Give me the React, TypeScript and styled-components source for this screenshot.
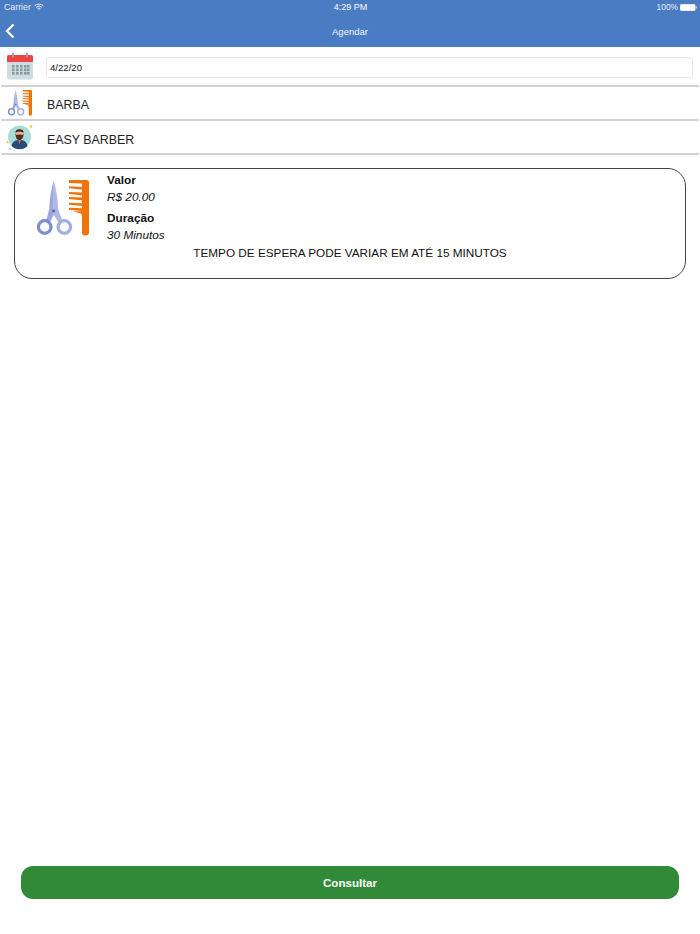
import React from 'react';
import styled, { createGlobalStyle } from 'styled-components';

const Global = createGlobalStyle`
  html, body { margin: 0; padding: 0; background: #fff; }
  body { font-family: "Liberation Sans", Arial, sans-serif; }
`;
const Page = styled.div`
  width: 700px; height: 934px; display: flex; flex-direction: column; background: #fff; overflow: hidden;
`;
const Header = styled.header`
  height: 47px; flex: none; background: #4a7cc4; color: #fff; display: flex; flex-direction: column;
`;
const StatusBar = styled.div`
  height: 14px; padding: 0 3px 0 4px; display: grid; grid-template-columns: 1fr auto 1fr; align-items: center;
  font-size: 8.8px; color: #e6edf8;
`;
const StatusLeft = styled.div`display: flex; align-items: center; gap: 3px;`;
const StatusRight = styled.div`display: flex; align-items: center; justify-content: flex-end; gap: 2px; font-size: 8.4px;`;
const Clock = styled.div`color: #fff; font-size: 9px;`;
const NavBar = styled.div`
  flex: 1; display: grid; grid-template-columns: 1fr auto 1fr; align-items: center; font-size: 9.5px; color: #eef3fb; margin-top: 1px;
`;
const BackSlot = styled.div`display: flex; align-items: center; padding-left: 4px;`;
const Row = styled.div<{ $h: number }>`
  box-sizing: border-box; height: ${p => p.$h}px; flex: none; margin: 0 1px; border-bottom: 2px solid #d2d2d2;
  display: flex; align-items: center; padding: 0 6px 0 5px; gap: 12px;
`;
const IconSlot = styled.div`width: 28px; height: 28px; flex: none; display: flex; align-items: center; justify-content: center;`;
const DateInput = styled.div`
  flex: 1; box-sizing: border-box; height: 21px; margin-top: 3px; border: 1px solid #e8e8e8; border-radius: 3px;
  font-size: 9.6px; color: #111; display: flex; align-items: center; padding-left: 3px;
`;
const RowLabel = styled.div<{ $dy: number }>`font-size: 12.4px; color: #222; margin: ${p => p.$dy}px 0 0 1px;`;
const Card = styled.section`
  margin: 13px 14px 0; height: 111px; box-sizing: border-box; border: 1px solid #444; border-radius: 18px; padding-top: 3px; flex: none;
`;
const CardTop = styled.div`display: flex; gap: 18px; padding-left: 22px;`;
const CardIcon = styled.div`margin-top: 8px; line-height: 0;`;
const Info = styled.div`display: flex; flex-direction: column; color: #111; font-size: 11.8px;`;
const Label = styled.div<{ $mt: number }>`font-weight: 700; line-height: 15px; margin-top: ${p => p.$mt}px;`;
const Value = styled.div`font-style: italic; line-height: 19px;`;
const Notice = styled.div`text-align: center; font-size: 11.75px; color: #111; line-height: 16px;`;
const Spacer = styled.div`flex: 1;`;
const Button = styled.button`
  flex: none; margin: 0 21px 35px; height: 33px; border: 0; border-radius: 12px; background: #318a38; color: #fff;
  font: 700 11.6px "Liberation Sans", Arial, sans-serif;
`;

const Wifi = () => (
  <svg width="10" height="8" viewBox="0 0 11 8" fill="none" stroke="#e6edf8" strokeWidth="1.1">
    <path d="M.7 2.7a7 7 0 0 1 9.6 0M2.3 4.3a4.7 4.7 0 0 1 6.4 0M3.9 5.9a2.3 2.3 0 0 1 3.2 0" />
    <circle cx="5.5" cy="7" r=".6" fill="#e6edf8" stroke="none" />
  </svg>
);
const Battery = () => (
  <svg width="17" height="7" viewBox="0 0 17 7">
    <rect x="0.3" y="0.3" width="14.8" height="6.4" rx="1.2" fill="#fff" stroke="#fff" strokeWidth=".5" />
    <rect x="15.6" y="2.3" width="1.2" height="2.4" rx=".5" fill="#dfe8f5" />
  </svg>
);
const Back = () => (
  <svg width="12" height="16" viewBox="0 0 12 16" fill="none" stroke="#fff" strokeWidth="2.3">
    <path d="M9.5 1.5 3 8l6.5 6.5" />
  </svg>
);
const Calendar = () => (
  <svg width="28" height="28" viewBox="0 0 28 28">
    <rect x="1" y="3" width="26" height="24.5" rx="2" fill="#cfdce2" />
    <path d="M1 10V5a2 2 0 0 1 2-2h22a2 2 0 0 1 2 2v5z" fill="#ee4343" />
    <rect x="6" y="0.5" width="2" height="5" rx="1" fill="#9aa6ad" />
    <rect x="20" y="0.5" width="2" height="5" rx="1" fill="#9aa6ad" />
    {[13, 16.5, 20].map(y => [6, 10, 14, 18, 21].map(x => (
      <rect key={`${x}-${y}`} x={x} y={y} width="2.6" height="2.6" fill="#8b9aa2" />
    )))}
  </svg>
);
const toothCentres = [7.3, 13, 18, 23.7, 28.7];
const ScissorsComb = ({ w, h }: { w: number; h: number }) => (
  <svg width={w} height={h} viewBox="0 0 52 56">
    <path d="M16.7 0C14.5 9 12.3 19 12.3 29L9 41L12.5 43L16.7 35z" fill="#9ca7de" />
    <path d="M16.7 0C19 9 21.1 19 21.1 29L25.5 41L22 43L16.7 35z" fill="#b0b9e6" />
    <circle cx="7.7" cy="47" r="6.3" fill="none" stroke="#7f8dd3" strokeWidth="3.2" />
    <circle cx="27.3" cy="47" r="6.3" fill="none" stroke="#a3aee0" strokeWidth="3.2" />
    <circle cx="16.7" cy="31" r="1.4" fill="#4f5fb5" />
    <path d="M32 0H49.5a2.5 2.500 0 0 1 2.500 2.500V52.500a3 3 0 0 1-3 3H48a3 3 0 0 1-3-3V36.500a3 3 0 0 0-3-3.500L36 31.500L45 31V3.500L32 3z" fill="#f0730a" />
    {toothCentres.map(y => (
      <polygon key={y} points={`32,${y - 1} 46,${y - 0.4} 46,${y + 2.4} 32,${y + 1}`} fill="#f0730a" />
    ))}
  </svg>
);
const Barber = () => (
  <svg width="28" height="28" viewBox="0 0 28 28">
    <circle cx="13.5" cy="14" r="11.5" fill="#a9dcd9" />
    <path d="M5.5 23c1-5 4-6 8-6s7 1 8 6a11.5 11.5 0 0 1-16 0z" fill="#274c77" />
    <path d="M12 17l1.5 4 1.5-4z" fill="#e8604c" />
    <circle cx="13.5" cy="10.5" r="4.2" fill="#e3b48e" />
    <path d="M9.3 9.5c0-4.5 8.4-4.5 8.4 0l-.6 0c-2-1.5-5.2-1.5-7.2 0z" fill="#33231c" />
    <path d="M9.4 10.5c.3 5 1.8 6.5 4.1 6.5s3.8-1.5 4.1-6.5l-1 1.5c-2-.8-4.2-.8-6.2 0z" fill="#4a2f22" />
    <circle cx="25" cy="3.5" r="1.3" fill="#f2c230" />
    <circle cx="1.5" cy="19" r="1.1" fill="#f2c230" />
    <circle cx="25" cy="22" r=".8" fill="#efe08a" />
    <circle cx="4" cy="26" r=".7" fill="#5b7fc0" />
  </svg>
);

export default function App() {
  return (
    <Page>
      <Global />
      <Header>
        <StatusBar>
          <StatusLeft>Carrier <Wifi /></StatusLeft>
          <Clock>4:29 PM</Clock>
          <StatusRight>100% <Battery /></StatusRight>
        </StatusBar>
        <NavBar>
          <BackSlot><Back /></BackSlot>
          <div>Agendar</div>
          <div />
        </NavBar>
      </Header>
      <Row $h={40}>
        <IconSlot><Calendar /></IconSlot>
        <DateInput>4/22/20</DateInput>
      </Row>
      <Row $h={34}>
        <IconSlot><ScissorsComb w={24} h={26} /></IconSlot>
        <RowLabel $dy={3}>BARBA</RowLabel>
      </Row>
      <Row $h={34}>
        <IconSlot><Barber /></IconSlot>
        <RowLabel $dy={5}>EASY BARBER</RowLabel>
      </Row>
      <Card>
        <CardTop>
          <CardIcon><ScissorsComb w={52} h={56} /></CardIcon>
          <Info>
            <Label $mt={1}>Valor</Label>
            <Value>R$ 20.00</Value>
            <Label $mt={4}>Duração</Label>
            <Value>30 Minutos</Value>
          </Info>
        </CardTop>
        <Notice>TEMPO DE ESPERA PODE VARIAR EM ATÉ 15 MINUTOS</Notice>
      </Card>
      <Spacer />
      <Button>Consultar</Button>
    </Page>
  );
}
